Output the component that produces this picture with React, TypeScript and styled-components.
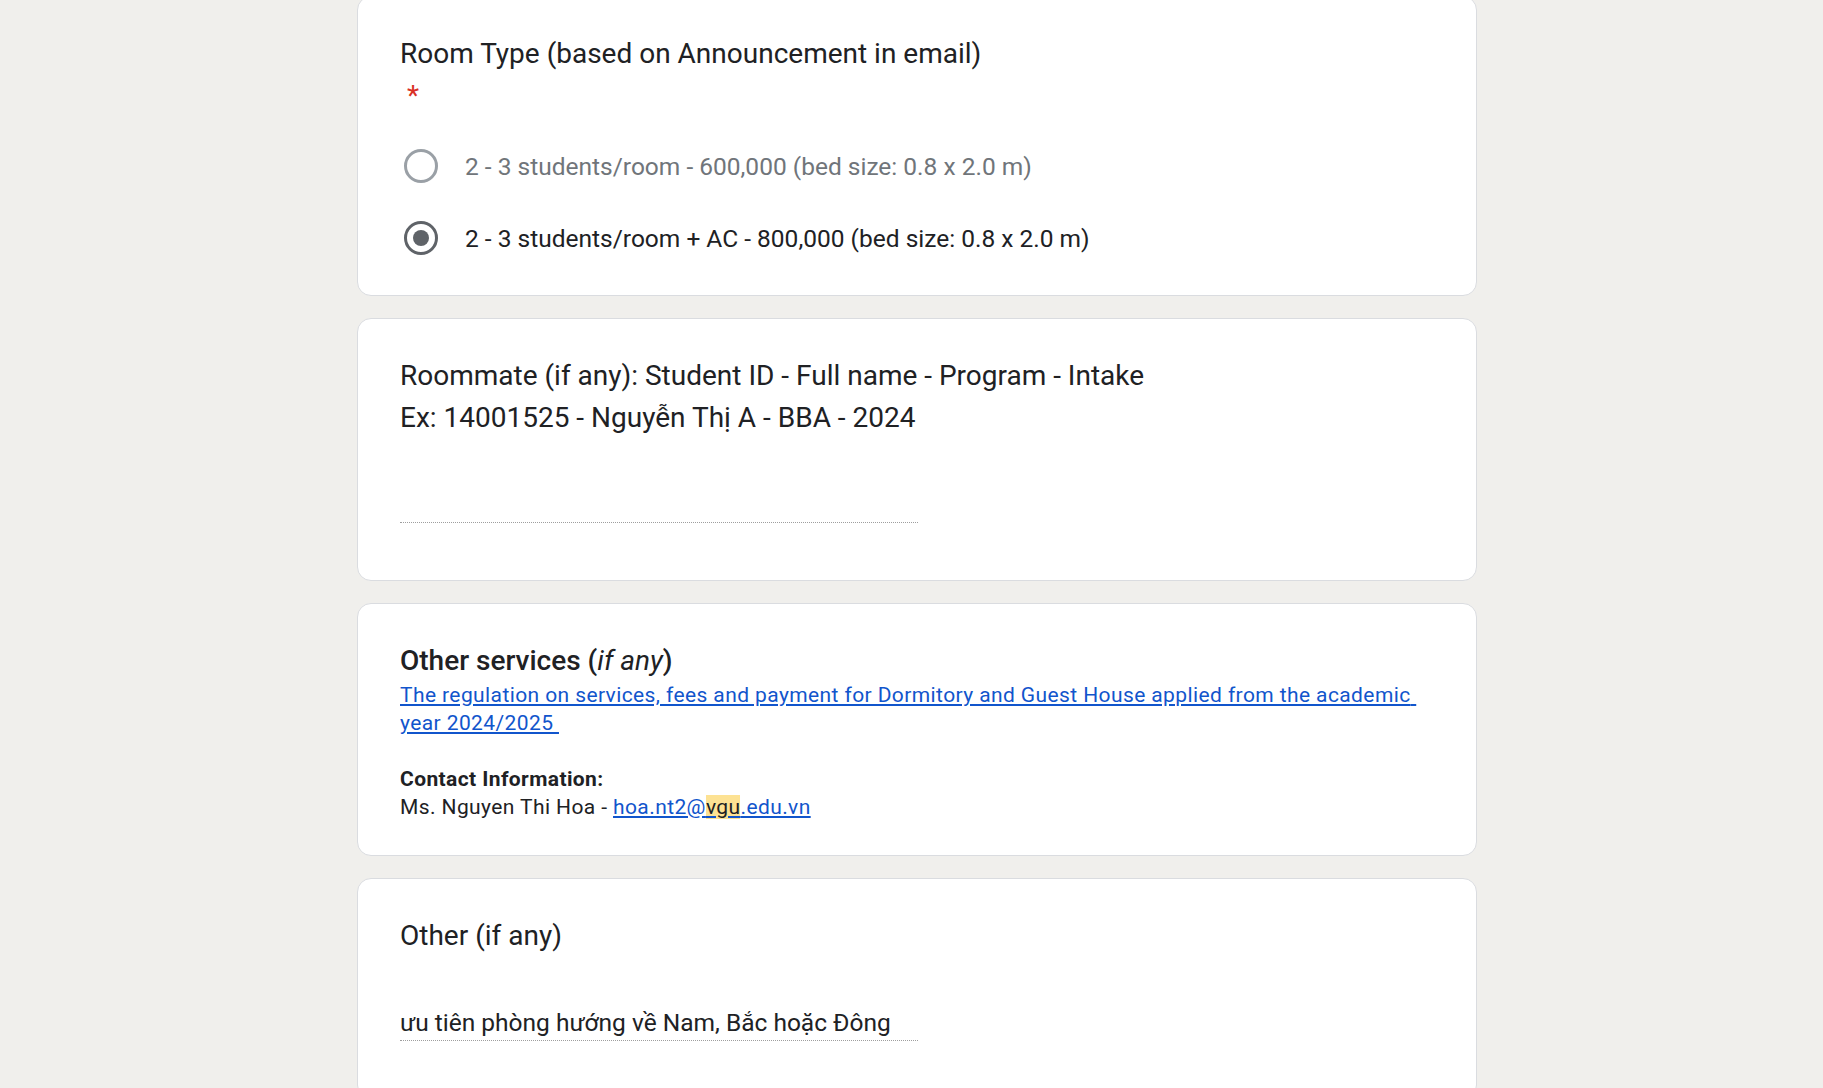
import React from "react";
import styled, { createGlobalStyle } from "styled-components";

const Global = createGlobalStyle`
  html, body {
    margin: 0;
    padding: 0;
    background: #f0efec;
    font-family: Roboto, "Noto Sans", Arial, sans-serif;
    color: #202124;
  }
  #root { overflow: hidden; height: 1088px; }
`;

const Page = styled.div`
  display: flex;
  flex-direction: column;
  align-items: center;
  gap: 22px;
  margin-top: -4px;
  padding-left: 11px;
`;

const Card = styled.section<{ $pb: number }>`
  box-sizing: border-box;
  width: 1120px;
  background: #ffffff;
  border: 1px solid #dadce0;
  border-radius: 14px;
  padding: 36px 42px ${(p) => p.$pb}px;
`;

const Title = styled.div`
  font-size: 28px;
  line-height: 42px;
  font-weight: 400;
  letter-spacing: 0;
  color: #202124;
`;

const Required = styled.div`
  font-size: 28px;
  line-height: 42px;
  color: #d93025;
  padding-left: 7px;
`;

const OptionList = styled.div`
  display: flex;
  flex-direction: column;
  margin-top: 13px;
`;

const Option = styled.div`
  display: flex;
  align-items: center;
  height: 72px;
`;

const Radio = styled.span<{ $checked: boolean }>`
  box-sizing: border-box;
  flex: none;
  width: 34px;
  height: 34px;
  margin-left: 4px;
  border-radius: 50%;
  border: 3.5px solid ${(p) => (p.$checked ? "#5f6368" : "#9aa0a6")};
  display: flex;
  align-items: center;
  justify-content: center;
  &::after {
    content: "";
    display: ${(p) => (p.$checked ? "block" : "none")};
    width: 16px;
    height: 16px;
    border-radius: 50%;
    background: #5f6368;
  }
`;

const OptionLabel = styled.span<{ $muted: boolean }>`
  margin-left: 27px;
  font-size: 24.5px;
  line-height: 35px;
  letter-spacing: 0;
  color: ${(p) => (p.$muted ? "#70757a" : "#202124")};
`;

const Answer = styled.div`
  box-sizing: content-box;
  width: 518px;
  height: 35px;
  margin-top: 48px;
  border-bottom: 1px dotted rgba(0, 0, 0, 0.38);
  font-size: 24.5px;
  line-height: 35px;
  letter-spacing: 0;
  color: #202124;
  white-space: nowrap;
`;

const SectionTitle = styled.div`
  font-size: 28px;
  line-height: 41px;
  font-weight: 500;
  color: #202124;
  em { font-style: italic; font-weight: 400; }
`;

const Description = styled.div`
  font-size: 21px;
  line-height: 28px;
  letter-spacing: 0.4px;
  color: #202124;
  white-space: pre-wrap;
`;

const Link = styled.a`
  color: #1155cc;
  text-decoration: underline;
`;

const Bold = styled.span`
  font-weight: 700;
`;

const Highlight = styled.mark`
  background: #fde293;
  color: #202124;
`;

const options = [
  { label: "2 - 3 students/room - 600,000 (bed size: 0.8 x 2.0 m)", checked: false },
  { label: "2 - 3 students/room + AC - 800,000 (bed size: 0.8 x 2.0 m)", checked: true },
];

export default function App() {
  return (
    <>
      <Global />
      <Page>
        <Card $pb={21}>
          <Title>Room Type (based on Announcement in email)</Title>
          <Required>*</Required>
          <OptionList>
            {options.map((o) => (
              <Option key={o.label}>
                <Radio $checked={o.checked} />
                <OptionLabel $muted={!o.checked}>{o.label}</OptionLabel>
              </Option>
            ))}
          </OptionList>
        </Card>

        <Card $pb={57}>
          <Title>
            Roommate (if any): Student ID - Full name - Program - Intake
            <br />
            Ex: 14001525 - Nguyễn Thị A - BBA - 2024
          </Title>
          <Answer />
        </Card>

        <Card $pb={34}>
          <SectionTitle>
            Other services (<em>if any</em>)
          </SectionTitle>
          <Description>
            <Link href="#">
              {"The regulation on services, fees and payment for Dormitory and Guest House applied from the academic year 2024/2025 "}
            </Link>
            {"\n\n"}
            <Bold>Contact Information:</Bold>
            {"\nMs. Nguyen Thi Hoa - "}
            <Link href="#">
              hoa.nt2@<Highlight>vgu</Highlight>.edu.vn
            </Link>
          </Description>
        </Card>

        <Card $pb={57}>
          <Title>Other (if any)</Title>
          <Answer>ưu tiên phòng hướng về Nam, Bắc hoặc Đông</Answer>
        </Card>
      </Page>
    </>
  );
}
